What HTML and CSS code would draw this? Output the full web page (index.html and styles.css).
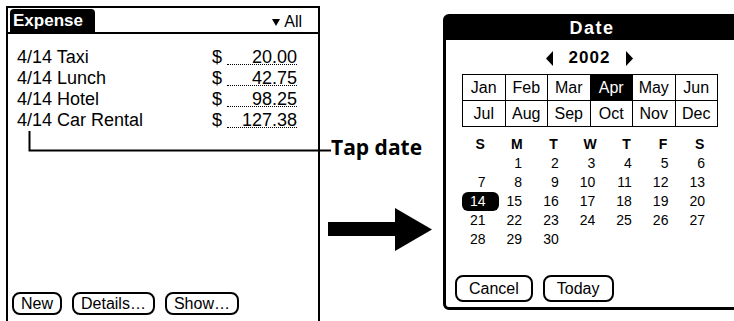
FILE: index.html
```html
<!DOCTYPE html>
<html lang="en">

<head>
  <meta charset="UTF-8">
  <meta name="viewport" content="width=device-width, initial-scale=1.0">
  <title>Expense - Tap date</title>
  <link rel="stylesheet" href="styles.css">
</head>

<body>
  <!-- Expense list screen -->
  <div class="screen">
    <div class="titlebar">
      <div class="title-tab">Expense</div>
      <div class="filter">
        <svg width="8" height="7" viewBox="0 0 8 7"><polygon points="0,0 8,0 4,7" fill="#000"/></svg>
        <span>All</span>
      </div>
    </div>

    <div class="list">
      <div class="row"><span>4/14 Taxi</span><span>$</span><span class="amt">20.00</span></div>
      <div class="row"><span>4/14 Lunch</span><span>$</span><span class="amt">42.75</span></div>
      <div class="row"><span>4/14 Hotel</span><span>$</span><span class="amt">98.25</span></div>
      <div class="row"><span>4/14 Car Rental</span><span>$</span><span class="amt">127.38</span></div>
    </div>

    <div class="buttons">
      <span class="btn">New</span>
      <span class="btn">Details…</span>
      <span class="btn">Show…</span>
    </div>
  </div>

  <!-- Callout and arrow -->
  <div class="callout">
    <div class="tap-label">Tap date</div>
    <svg class="arrow" width="105" height="44" viewBox="0 0 105 44">
      <rect x="0" y="14" width="68" height="14" fill="#000"/>
      <polygon points="67,0 104,21.5 67,43" fill="#000"/>
    </svg>
  </div>

  <!-- Date picker dialog -->
  <div class="dialog">
    <div class="dialog-title">Date</div>

    <div class="year">
      <svg width="7" height="15" viewBox="0 0 7 15"><polygon points="7,0 0,7.5 7,15" fill="#000"/></svg>
      <span>2002</span>
      <svg width="7" height="15" viewBox="0 0 7 15"><polygon points="0,0 7,7.5 0,15" fill="#000"/></svg>
    </div>

    <div class="months">
      <span>Jan</span><span>Feb</span><span>Mar</span><span class="on">Apr</span><span>May</span><span>Jun</span>
      <span>Jul</span><span>Aug</span><span>Sep</span><span>Oct</span><span>Nov</span><span>Dec</span>
    </div>

    <div class="days">
      <b>S</b><b>M</b><b>T</b><b>W</b><b>T</b><b>F</b><b>S</b>
      <span></span><span>1</span><span>2</span><span>3</span><span>4</span><span>5</span><span>6</span>
      <span>7</span><span>8</span><span>9</span><span>10</span><span>11</span><span>12</span><span>13</span>
      <span class="sel">14</span><span>15</span><span>16</span><span>17</span><span>18</span><span>19</span><span>20</span>
      <span>21</span><span>22</span><span>23</span><span>24</span><span>25</span><span>26</span><span>27</span>
      <span>28</span><span>29</span><span>30</span>
    </div>

    <div class="dialog-buttons">
      <span class="btn big">Cancel</span>
      <span class="btn big">Today</span>
    </div>
  </div>

  <!-- leader line from the date to the label -->
  <svg class="leader" width="734" height="321" viewBox="0 0 734 321">
    <path d="M29.5 131 V150.5 H331" fill="none" stroke="#000" stroke-width="2"/>
  </svg>
</body>

</html>
```

FILE: styles.css
```css
* {
  box-sizing: border-box;
}

body {
  margin: 0;
  width: 734px;
  height: 321px;
  overflow: hidden;
  position: relative;
  display: flex;
  align-items: flex-start;
  background-color: #fff;
  color: #000;
  font-family: "Liberation Sans", Arial, sans-serif;
}

/* Expense screen */
.screen {
  flex-shrink: 0;
  width: 314px;
  height: 322px;
  margin: 6px 0 0 6px;
  border: 2px solid #000;
  border-bottom: 0;
  display: flex;
  flex-direction: column;
}

.titlebar {
  display: flex;
  align-items: flex-start;
  justify-content: space-between;
  height: 26px;
  border-bottom: 2px solid #000;
}

.title-tab {
  margin: 1px 0 0 2px;
  width: 85px;
  height: 23px;
  padding-left: 3px;
  background-color: #000;
  color: #fff;
  font-weight: bold;
  font-size: 17px;
  line-height: 23px;
  border-radius: 4px 4px 0 0;
}

.filter {
  display: flex;
  align-items: center;
  gap: 4px;
  margin: 6px 16px 0 0;
  font-size: 16px;
  line-height: 16px;
}

.list {
  padding: 13px 0 0 9px;
  font-size: 18px;
  line-height: 21px;
}

.row {
  display: grid;
  grid-template-columns: 195px 15px 70px;
}

.amt {
  height: 18px;
  text-align: right;
  border-bottom: 1px dotted #000;
}

.buttons {
  margin-top: auto;
  padding: 0 0 13px 4px;
  display: flex;
  gap: 10px;
}

.btn {
  height: 23px;
  padding: 0 7px;
  border: 2px solid #000;
  border-radius: 8px;
  font-size: 16px;
  line-height: 19px;
}

/* Callout */
.callout {
  flex-shrink: 0;
  width: 123px;
  display: flex;
  flex-direction: column;
  align-items: flex-start;
}

.tap-label {
  margin: 135px 0 0 11px;
  font-family: "Open Sans", sans-serif;
  font-weight: bold;
  font-size: 21px;
  line-height: 24px;
}

.arrow {
  margin: 49px 0 0 8px;
}

.leader {
  position: absolute;
  left: 0;
  top: 0;
  pointer-events: none;
}

/* Date dialog */
.dialog {
  flex-shrink: 0;
  width: 298px;
  height: 296px;
  margin-top: 14px;
  border: 3px solid #000;
  border-radius: 6px;
  display: flex;
  flex-direction: column;
}

.dialog-title {
  height: 23px;
  background-color: #000;
  color: #fff;
  text-align: center;
  font-weight: bold;
  font-size: 18px;
  line-height: 22px;
  letter-spacing: 1.5px;
}

.year {
  margin-top: 8px;
  height: 20px;
  padding-right: 5px;
  display: flex;
  justify-content: center;
  align-items: center;
  gap: 16px;
  font-weight: bold;
  font-size: 17px;
  letter-spacing: 1px;
}

.months {
  margin: 6px 0 0 16px;
  width: 256px;
  display: grid;
  grid-template-columns: repeat(6, 1fr);
  grid-auto-rows: 25px;
  gap: 1px;
  border: 1px solid #000;
  background-color: #000;
  font-size: 16px;
}

.months span {
  display: flex;
  align-items: center;
  justify-content: center;
  background-color: #fff;
}

.months .on {
  background-color: #000;
  color: #fff;
}

.days {
  margin: 8px 0 0 16px;
  width: 256px;
  display: grid;
  grid-template-columns: repeat(7, 1fr);
  grid-auto-rows: 19px;
  font-size: 14px;
  line-height: 19px;
}

.days b {
  text-align: center;
}

.days span {
  text-align: right;
  padding-right: 13px;
}

.days .sel {
  background-color: #000;
  color: #fff;
  border-radius: 6px;
}

.dialog-buttons {
  margin-top: auto;
  padding: 0 0 5px 9px;
  display: flex;
  gap: 10px;
}

.btn.big {
  height: 27px;
  line-height: 23px;
  padding: 0 12px;
}
```
